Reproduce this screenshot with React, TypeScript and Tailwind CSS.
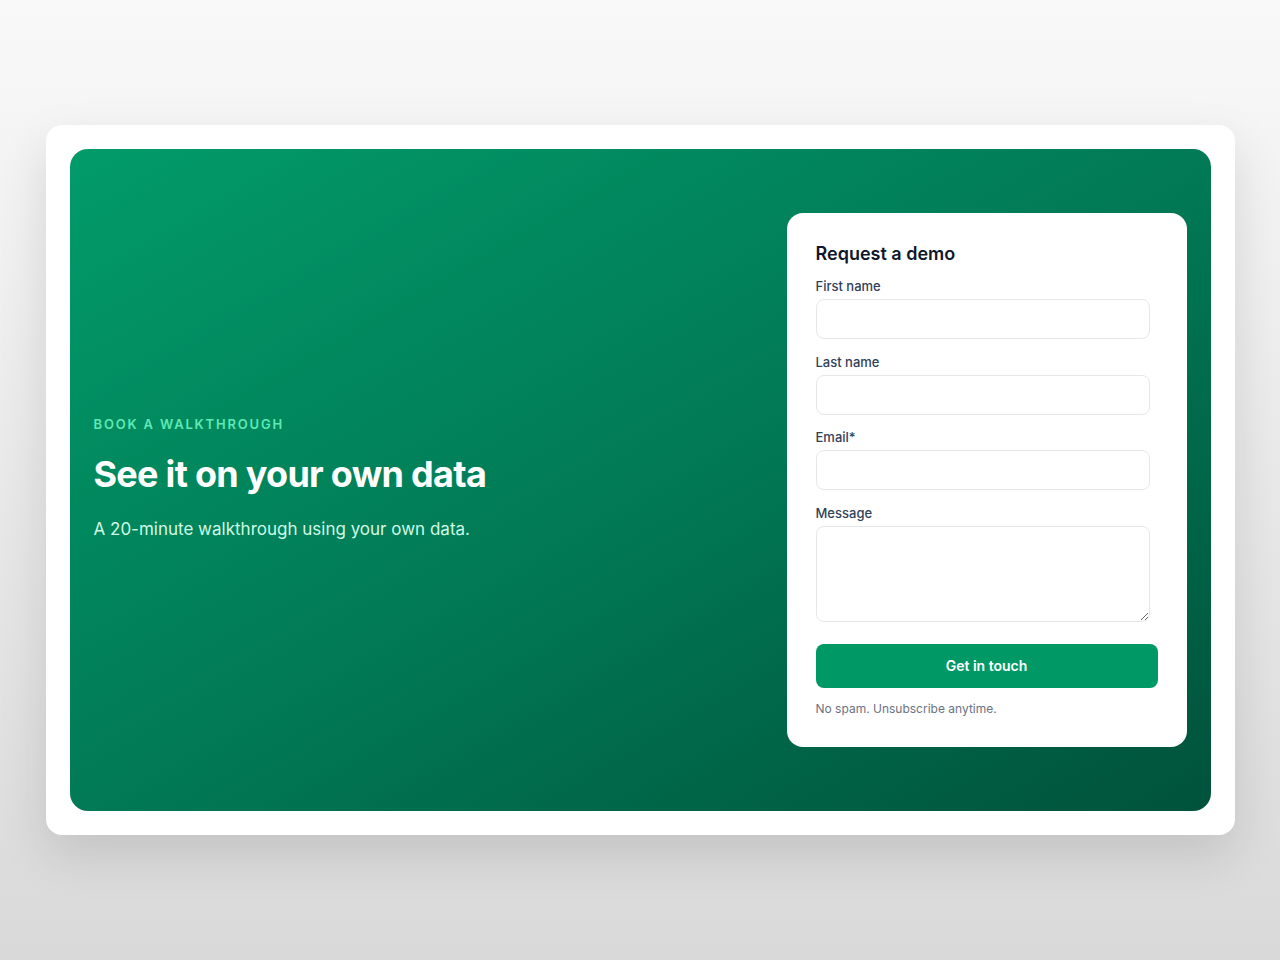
const inputCls =
  'block h-10 w-[334px] rounded-lg border border-gray-200 bg-white px-3 text-sm text-slate-900 outline-none';

function Field({ label, id }: { label: string; id: string }) {
  return (
    <div>
      <label htmlFor={id} className="mb-1 block text-[13px] leading-[18px] font-medium text-slate-700">
        {label}
      </label>
      <input id={id} type="text" className={inputCls} />
    </div>
  );
}

export default function App() {
  return (
    <div
      className="flex min-h-screen items-center justify-center bg-linear-to-b from-[#f9f9f9] to-[#d9d9d9]"
      style={{ fontFamily: 'Inter, "Noto Sans", sans-serif' }}
    >
      <div className="w-[1189px] rounded-2xl bg-white p-6 shadow-[0_20px_50px_rgba(0,0,0,0.12)]">
        <div className="flex items-center justify-between rounded-[18px] bg-linear-to-br from-[#029b69] via-[#017a55] to-[#00523b] px-6 py-16">
          <div className="flex flex-col pb-[3px]">
            <p className="text-[13px] leading-5 font-semibold tracking-[0.14em] text-emerald-300">
              BOOK A WALKTHROUGH
            </p>
            <h1 className="mt-5 text-[36px] leading-10 font-bold tracking-[-0.02em] text-white">
              See it on your own data
            </h1>
            <p className="mt-[21px] text-[17px] leading-7 text-emerald-100">
              A 20-minute walkthrough using your own data.
            </p>
          </div>
          <div className="w-[400px] rounded-2xl bg-white px-[29px] pt-[29px] pb-[30px]">
            <h2 className="text-lg leading-6 font-semibold text-slate-900">Request a demo</h2>
            <div className="mt-[11px] flex flex-col gap-[13.6px]">
              <Field label="First name" id="first" />
              <Field label="Last name" id="last" />
              <Field label="Email*" id="email" />
              <div>
                <label htmlFor="msg" className="mb-1 block text-[13px] leading-[18px] font-medium text-slate-700">
                  Message
                </label>
                <textarea
                  id="msg"
                  className="block h-24 w-[334px] rounded-lg border border-gray-200 bg-white px-3 py-2 text-sm outline-none"
                />
              </div>
            </div>
            <button className="mt-[22px] h-11 w-full rounded-lg bg-[#009966] text-sm font-semibold text-white">
              Get in touch
            </button>
            <p className="mt-[13px] text-xs leading-4 text-gray-500">No spam. Unsubscribe anytime.</p>
          </div>
        </div>
      </div>
    </div>
  );
}
